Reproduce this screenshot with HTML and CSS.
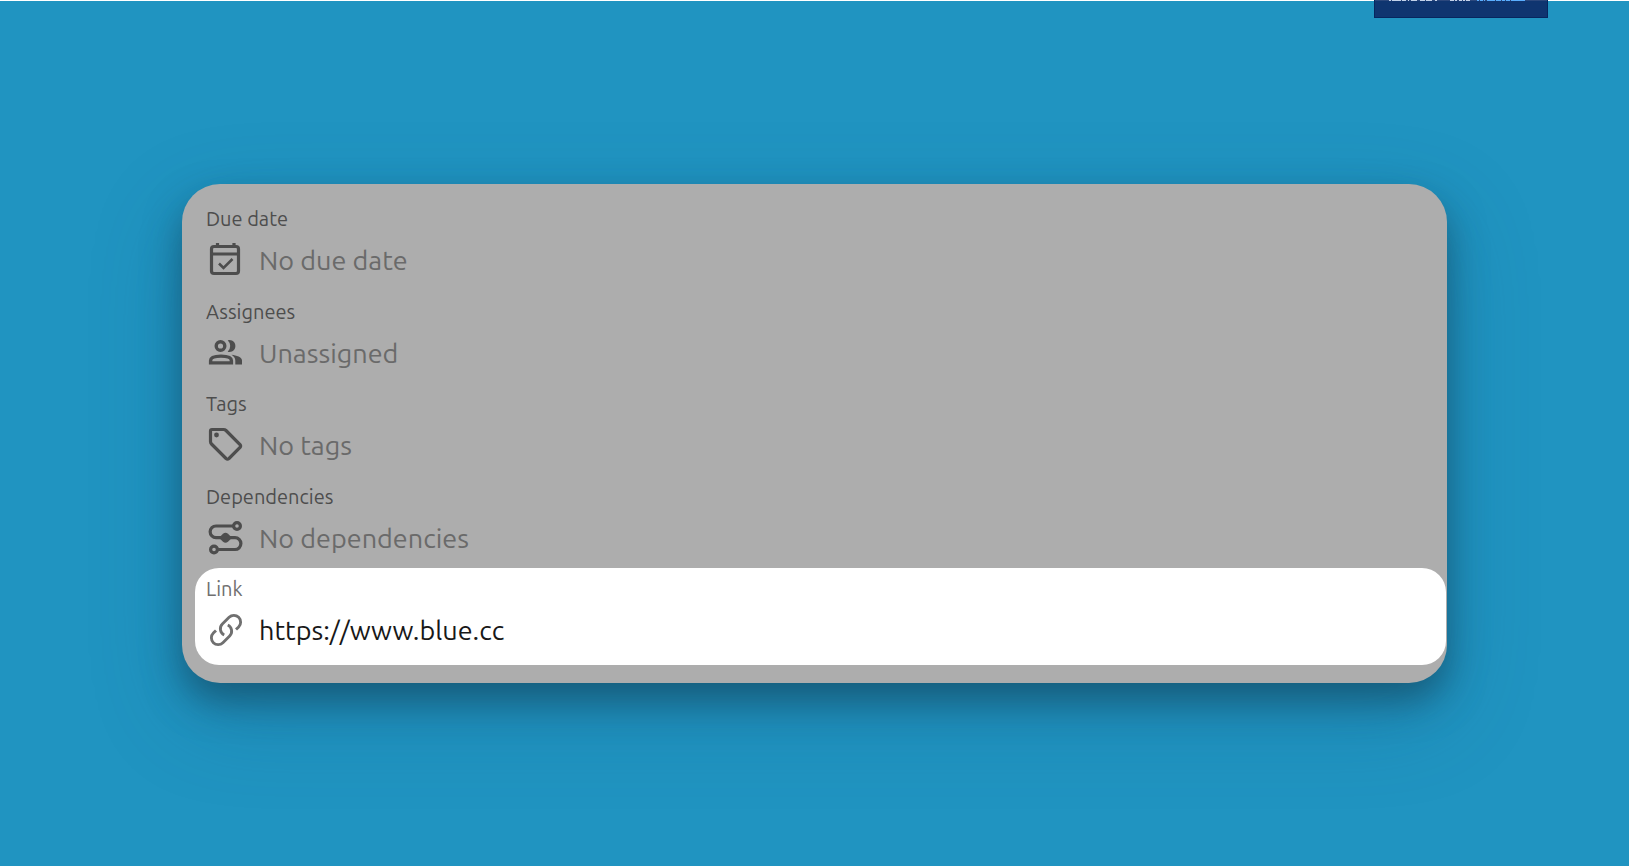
FILE: index.html
```html
<!DOCTYPE html>
<html lang="en">
<head>
<meta charset="utf-8">
<meta name="viewport" content="width=device-width, initial-scale=1">
<title>Record details</title>
<link rel="stylesheet" href="styles.css">
</head>
<body>
<div class="notice">
  <svg class="notice-marks" viewBox="0 0 137 1" preserveAspectRatio="none" aria-hidden="true">
    <path d="M0 .5H137" fill="none" stroke="#c3d2ea" stroke-dasharray="2 1 9 1 4 2 1 2 6 3 5 1 6 3 2 13 4 1 2 2 3 1 2 1 4 60"/>
    <path d="M88 .5H136" fill="none" stroke="#5aaeff" stroke-dasharray="2 1 3 1 1 2 8 1 5 1 3 1 4 1 40"/>
  </svg>
</div>
<main class="stage">
  <section class="card">
    <div class="fields">
      <div class="field">
        <h2 class="label">Due date</h2>
        <button class="value" type="button">
          <svg class="icon" viewBox="0 0 36 36" aria-hidden="true"><g fill="none" stroke="currentColor" stroke-width="3.200"><rect x="3.500" y="4.500" width="27" height="27" rx="2.500"/><path d="M3 12H31M9.500 1V5.500M26 1V5.500"/><path d="M11 21.500l4.500 4.500 9-9" stroke-width="2.600"/></g></svg>
          <span>No due date</span>
        </button>
      </div>
      <div class="field">
        <h2 class="label">Assignees</h2>
        <button class="value" type="button">
          <svg class="icon" viewBox="0 0 36 36" aria-hidden="true"><circle cx="12.500" cy="11" r="4.300" fill="none" stroke="currentColor" stroke-width="3.400"/><path d="M19.700 5.300Q22 4.800 24 5.600A6 6 0 0 1 24 16.400Q22 17.200 19.700 16.700Q22.200 14.200 22.200 11T19.700 5.300Z" fill="currentColor"/><path d="M2.600 27.900V25.500C2.600 22 8.500 21.100 13 21.100S23.400 22 23.400 25.500V27.900Z" fill="none" stroke="currentColor" stroke-width="3.400"/><path d="M23.500 19.800C28.500 20.500 34 22.100 34 25.500V29.500H27.300V25.500C27.300 23 25.800 21.200 23.500 19.800Z" fill="currentColor"/></svg>
          <span>Unassigned</span>
        </button>
      </div>
      <div class="field">
        <h2 class="label">Tags</h2>
        <button class="value" type="button">
          <svg class="icon" viewBox="0 0 36 36" aria-hidden="true"><path d="M4 2.500H15.500Q17 2.500 18 3.500L32 17.500Q33.200 19 32 20.500L21 31.500Q19.500 32.700 18 31.500L3.500 17Q2.500 16 2.500 14.500V4Q2.500 2.500 4 2.500Z" fill="none" stroke="currentColor" stroke-width="3.200"/><circle cx="8.500" cy="8" r="2.400" fill="currentColor"/></svg>
          <span>No tags</span>
        </button>
      </div>
      <div class="field">
        <h2 class="label">Dependencies</h2>
        <button class="value" type="button">
          <svg class="icon" viewBox="0 0 36 36" aria-hidden="true"><g fill="none" stroke="currentColor" stroke-width="3.200"><circle cx="29" cy="6" r="3.400"/><circle cx="6" cy="29.500" r="3.400"/><path d="M25.500 6H8A5.800 5.800 0 0 0 8 17.700H27A5.700 5.700 0 0 1 27 29.500H9.500"/></g><path d="M11 17.700L15 13.700Q17.500 12 20 13.700L24 17.700L20 21.800Q17.500 23.500 15 21.800Z" fill="currentColor"/></svg>
          <span>No dependencies</span>
        </button>
      </div>
    </div>
    <div class="field field-active">
      <h2 class="label">Link</h2>
      <a class="value" href="https://www.blue.cc">
        <svg class="icon" viewBox="0 0 24 24" aria-hidden="true"><path d="M13.190 8.688a4.500 4.500 0 0 1 1.242 7.244l-4.500 4.500a4.500 4.500 0 0 1-6.364-6.364l1.757-1.757m13.350-.622 1.757-1.757a4.500 4.500 0 0 0-6.364-6.364l-4.500 4.500a4.500 4.500 0 0 0 1.242 7.244" fill="none" stroke="currentColor" stroke-width="1.900"/></svg>
        <span>https://www.blue.cc</span>
      </a>
    </div>
  </section>
</main>
</body>
</html>
```
FILE: styles.css
```css
* { box-sizing: border-box; }

body {
  margin: 0;
  min-height: 100vh;
  display: flex;
  background: #2094c1;
  border-top: 1px solid #fff;
  font-family: Ubuntu, "Noto Sans", sans-serif;
}

.notice {
  position: absolute;
  top: 0;
  right: 81px;
  width: 174px;
  height: 18px;
  padding: 0 14px;
  background: linear-gradient(#2c487d 1px, #0f3570 1px);
  border: 1px solid #06265f;
  border-top: 0;
}

.notice-marks {
  display: block;
  width: 137px;
  height: 1px;
}

.stage {
  flex: 1;
  display: flex;
  align-items: center;
  justify-content: center;
}

.card {
  width: 78%;
  max-width: 1265px;
  padding: 14px 0 18px 13px;
  border-radius: 38px;
  background: #adadad;
  box-shadow:
    0 18px 36px rgba(16, 52, 70, 0.5),
    0 32px 90px rgba(20, 80, 120, 0.25);
}

.fields {
  display: grid;
  grid-auto-rows: 1fr;
  min-height: 370px;
  color: #4d4d4d;
}

.field {
  padding-top: 8px;
  padding-left: 11px;
}

.label {
  margin: 0;
  font-size: 20px;
  line-height: 26px;
  font-weight: 400;
}

.value {
  display: flex;
  align-items: center;
  gap: 15px;
  width: 100%;
  margin: 0;
  padding: 10px 0 0 2px;
  border: 0;
  background: none;
  color: inherit;
  font: inherit;
  font-size: 27px;
  line-height: 36px;
  text-align: left;
  text-decoration: none;
}

.fields .value span { color: #6a6a6a; }

.icon {
  flex: none;
  width: 36px;
  height: 36px;
}

.field-active {
  padding-bottom: 17px;
  margin-right: 1px;
  border-radius: 24px;
  background: #fff;
  color: #707070;
}

.field-active .value span { color: #181818; }
```
